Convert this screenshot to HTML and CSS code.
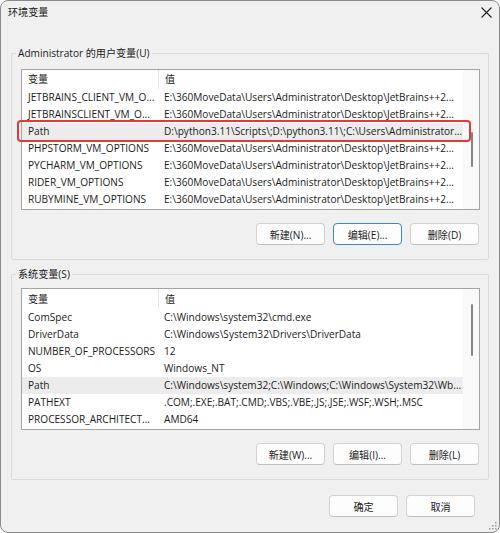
FILE: index.html
```html
<!DOCTYPE html>
<html lang="zh-CN">
<head>
  <meta charset="UTF-8" />
  <title>环境变量</title>
  <link rel="stylesheet" href="styles.css">
</head>
<body>
  <div class="window">
    <div class="titlebar">
      <span class="title">环境变量</span>
      <svg class="close" width="11" height="11" viewBox="0 0 11 11"><path d="M0.5 0.5L10.5 10.5M10.5 0.5L0.5 10.5" stroke="#222" stroke-width="1.1" fill="none"/></svg>
    </div>

    <fieldset class="group">
      <legend>Administrator 的用户变量(U)</legend>
      <div class="list list-user">
        <div class="table">
          <div class="row head"><span class="name">变量</span><span class="value">值</span></div>
          <div class="row"><span class="name">JETBRAINS_CLIENT_VM_O...</span><span class="value">E:\360MoveData\Users\Administrator\Desktop\JetBrains++2...</span></div>
          <div class="row"><span class="name">JETBRAINSCLIENT_VM_O...</span><span class="value">E:\360MoveData\Users\Administrator\Desktop\JetBrains++2...</span></div>
          <div class="row sel"><span class="name">Path</span><span class="value">D:\python3.11\Scripts\;D:\python3.11\;C:\Users\Administrator...</span></div>
          <div class="row"><span class="name">PHPSTORM_VM_OPTIONS</span><span class="value">E:\360MoveData\Users\Administrator\Desktop\JetBrains++2...</span></div>
          <div class="row"><span class="name">PYCHARM_VM_OPTIONS</span><span class="value">E:\360MoveData\Users\Administrator\Desktop\JetBrains++2...</span></div>
          <div class="row"><span class="name">RIDER_VM_OPTIONS</span><span class="value">E:\360MoveData\Users\Administrator\Desktop\JetBrains++2...</span></div>
          <div class="row"><span class="name">RUBYMINE_VM_OPTIONS</span><span class="value">E:\360MoveData\Users\Administrator\Desktop\JetBrains++2...</span></div>
        </div>
        <div class="scrollbar"><div class="thumb thumb-user"></div></div>
        <div class="mark"></div>
      </div>
      <div class="actions">
        <button>新建(N)...</button>
        <button class="focus">编辑(E)...</button>
        <button>删除(D)</button>
      </div>
    </fieldset>

    <fieldset class="group group-sys">
      <legend>系统变量(S)</legend>
      <div class="list">
        <div class="table">
          <div class="row head"><span class="name">变量</span><span class="value">值</span></div>
          <div class="row"><span class="name">ComSpec</span><span class="value">C:\Windows\system32\cmd.exe</span></div>
          <div class="row"><span class="name">DriverData</span><span class="value">C:\Windows\System32\Drivers\DriverData</span></div>
          <div class="row"><span class="name">NUMBER_OF_PROCESSORS</span><span class="value">12</span></div>
          <div class="row"><span class="name">OS</span><span class="value">Windows_NT</span></div>
          <div class="row sel"><span class="name">Path</span><span class="value">C:\Windows\system32;C:\Windows;C:\Windows\System32\Wb...</span></div>
          <div class="row"><span class="name">PATHEXT</span><span class="value">.COM;.EXE;.BAT;.CMD;.VBS;.VBE;.JS;.JSE;.WSF;.WSH;.MSC</span></div>
          <div class="row"><span class="name">PROCESSOR_ARCHITECT...</span><span class="value">AMD64</span></div>
        </div>
        <div class="scrollbar"><div class="thumb thumb-sys"></div></div>
      </div>
      <div class="actions">
        <button>新建(W)...</button>
        <button>编辑(I)...</button>
        <button>删除(L)</button>
      </div>
    </fieldset>

    <div class="footer">
      <button>确定</button>
      <button>取消</button>
    </div>

    <svg class="grip" width="8" height="8" viewBox="0 0 8 8">
      <rect x="6" y="0" width="1.5" height="1.5" fill="#999"/>
      <rect x="3" y="3" width="1.5" height="1.5" fill="#999"/>
      <rect x="6" y="3" width="1.5" height="1.5" fill="#999"/>
      <rect x="0" y="6" width="1.5" height="1.5" fill="#999"/>
      <rect x="3" y="6" width="1.5" height="1.5" fill="#999"/>
      <rect x="6" y="6" width="1.5" height="1.5" fill="#999"/>
    </svg>
  </div>
</body>
</html>
```

FILE: styles.css
```css
/* === Base === */
*{box-sizing:border-box}
body{margin:0;background:#fff;font-family:"Open Sans","Noto Sans CJK SC",sans-serif;font-size:10.1px;color:#1b1b1b}

/* === Window frame === */
.window{position:relative;width:500px;height:533px;background:#f0f0f0;border:1px solid #8a8a8a;border-radius:8px;display:flex;flex-direction:column}
.titlebar{height:44px;display:flex;align-items:flex-start;justify-content:space-between;padding:3px 7px 0 7px}
.title{line-height:16px}
.close{margin-top:3px}

/* === Group boxes === */
.group{margin:0 10px;padding:0 0 14px 0;border:1px solid #dadada;border-radius:2px;min-width:0}
.group legend{padding:0 2px;margin-left:4px;line-height:16px}
.group-sys{margin-top:6px}

/* === List views === */
.list{position:relative;display:flex;margin:8px 8px 0 9px;height:141px;background:#fff;border:1px solid #a3a3a3}
.group-sys .list{margin-top:6px;height:142px}
.table{flex:1;min-width:0}
.row{display:grid;grid-template-columns:136px 1fr;height:17px;line-height:17px}
.row span{white-space:nowrap;overflow:hidden;text-overflow:ellipsis}
.row .name{padding-left:6px}
.row .value{padding-left:6px}
.row.head{height:19px;line-height:19px}
.group-sys .row.head{height:20px;line-height:20px}
.row.head .value{border-left:1px solid #e5e5e5}
.row.sel{background:#ececec}
.scrollbar{width:16px;background:#f9f9f9}
.thumb{width:2px;margin-left:8px;background:#858585;border-radius:1px}
.thumb-user{margin-top:62px;height:35px}
.thumb-sys{margin-top:15px;height:52px}

/* highlight drawn over the Path row */
.mark{position:absolute;left:-5px;top:50px;width:454px;height:22px;border:2px solid #e2393c;border-radius:4px;pointer-events:none}

/* === Buttons === */
.actions{display:flex;justify-content:flex-end;gap:8px;margin:13px 9px 0 0}
button{width:69px;height:22px;padding:0;font:inherit;color:#1b1b1b;background:#fdfdfd;border:1px solid #d3d3d3;border-bottom-color:#bfbfbf;border-radius:4px}
button.focus{border:1px solid #3c88cf}
.footer{display:flex;justify-content:flex-end;gap:8px;margin:15px 24px 0 0}

.grip{position:absolute;right:2px;bottom:2px}
```
